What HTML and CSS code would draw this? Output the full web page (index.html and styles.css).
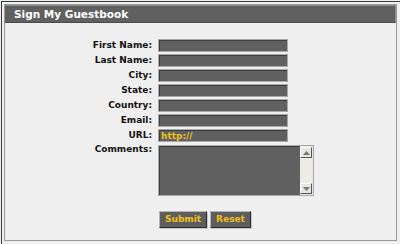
FILE: index.html
```html
<!DOCTYPE html>
<html>
<head>
<meta charset="utf-8">
<link rel="stylesheet" href="styles.css">
</head>
<body>
<div class="frame">
  <div class="panel">
    <div class="header">Sign My Guestbook</div>
    <form class="form">
      <label class="lbl">First Name:</label><input class="field" type="text">
      <label class="lbl">Last Name:</label><input class="field" type="text">
      <label class="lbl">City:</label><input class="field" type="text">
      <label class="lbl">State:</label><input class="field" type="text">
      <label class="lbl">Country:</label><input class="field" type="text">
      <label class="lbl">Email:</label><input class="field" type="text">
      <label class="lbl">URL:</label><input class="field url" type="text" value="http://">
      <label class="lbl top">Comments:</label>
      <div class="tawrap">
        <textarea class="ta"></textarea>
        <div class="sbar">
          <div class="sbtn"><svg width="7" height="4" viewBox="0 0 7 4"><path d="M0 4 L3.5 0 L7 4 Z" fill="#777"/></svg></div>
          <div class="strack"></div>
          <div class="sbtn"><svg width="7" height="4" viewBox="0 0 7 4"><path d="M0 0 L3.5 4 L7 0 Z" fill="#777"/></svg></div>
        </div>
      </div>
      <div class="buttons">
        <button type="button" class="btn">Submit</button>
        <button type="button" class="btn">Reset</button>
      </div>
    </form>
  </div>
</div>
</body>
</html>
```
FILE: styles.css
```css
html, body {
  margin: 0;
  padding: 0;
  background: #efefef;
}
body {
  width: 400px;
  height: 244px;
  overflow: hidden;
  font-family: "DejaVu Sans", Verdana, sans-serif;
}
.frame {
  margin: 1px 0 0 1px;
  width: 397px;
  height: 241px;
  border: 1px solid #3c3c3c;
  padding: 2px;
  box-sizing: content-box;
  background: #efefef;
}
.frame * { box-sizing: border-box; }
.panel {
  width: 393px;
  height: 237px;
  border: 1px solid #9a9a9a;
  background: #efefef;
  display: flex;
  flex-direction: column;
}
.header {
  height: 18px;
  background: #606060;
  border-top: 1px solid #8a8a8a;
  border-right: 1px solid #8a8a8a;
  border-bottom: 1px solid #4a4a4a;
  color: #ffffff;
  font-weight: bold;
  font-size: 10.5px;
  line-height: 16px;
  padding-left: 9px;
}
.form {
  display: grid;
  grid-template-columns: 100px auto;
  column-gap: 6px;
  row-gap: 2px;
  grid-auto-rows: 13px;
  padding-left: 47px;
  margin: 16px 0 0 0;
  align-items: center;
}
.lbl {
  text-align: right;
  font-weight: bold;
  font-size: 9px;
  color: #111;
  line-height: 13px;
  white-space: nowrap;
}
.lbl.top {
  align-self: start;
  line-height: 11px;
}
.field {
  width: 130px;
  height: 13px;
  margin: 0;
  padding: 0 0 0 2px;
  border: 1px solid #a8a8a8;
  box-shadow: inset 1px 1px 0 #3e3e3e;
  background: #606060;
  color: #f2c11a;
  font-family: "DejaVu Sans", Verdana, sans-serif;
  font-weight: bold;
  font-size: 9px;
  outline: none;
}
.tawrap {
  grid-row: span 4;
  align-self: start;
  width: 156px;
  height: 51px;
  margin-top: 1px;
  border: 1px solid #a8a8a8;
  box-shadow: inset 1px 1px 0 #3e3e3e;
  background: #606060;
  display: flex;
}
.ta {
  flex: 1;
  margin: 0;
  border: none;
  background: transparent;
  resize: none;
  outline: none;
  overflow: hidden;
}
.sbar {
  width: 13px;
  display: flex;
  flex-direction: column;
  background: #e9e8e4;
  padding: 1px 1px 1px 0;
}
.sbtn {
  height: 11px;
  background: #e6e6e2;
  border: 1px solid #555;
  border-top-color: #fff;
  border-left-color: #fff;
  display: flex;
  align-items: center;
  justify-content: center;
}
.strack {
  flex: 1;
  background: #ecebe7;
}
.buttons {
  grid-column: 2;
  display: flex;
  gap: 3px;
  margin-top: 7px;
  margin-left: 1px;
  align-self: start;
  height: 17px;
}
.btn {
  height: 17px;
  margin: 0;
  padding: 0 5px;
  background: #5e5e5e;
  border: 1px solid #2e2e2e;
  border-top-color: #b4b4b4;
  border-left-color: #b4b4b4;
  box-shadow: 1px 1px 0 #c8c8c8;
  color: #f2c11a;
  font-family: "DejaVu Sans", Verdana, sans-serif;
  font-weight: bold;
  font-size: 9px;
  line-height: 15px;
}
```
